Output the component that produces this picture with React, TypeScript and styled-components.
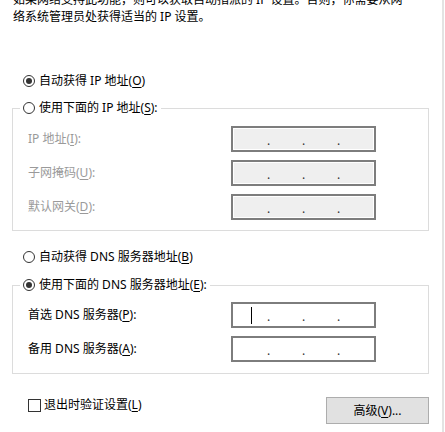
import React from "react";
import styled, { createGlobalStyle } from "styled-components";

const Global = createGlobalStyle`
  html, body { margin: 0; padding: 0; background: #fff; overflow: hidden; }
  body {
    font-family: "Noto Sans", "Noto Sans CJK SC", "Microsoft YaHei UI", sans-serif;
    font-size: 12px;
    color: #000;
  }
  * { box-sizing: border-box; }
`;

const Page = styled.div`
  display: flex;
  width: 445px;
  height: 432px;
  overflow: hidden;
  background: #fff;
`;

const Main = styled.div`
  flex: 0 0 442px;
  display: flex;
  flex-direction: column;
  padding: 0 13px 0 12px;
`;

const EdgeStrip = styled.div`
  flex: 0 0 2px;
  background: #e3e3e3;
`;

const Intro = styled.p`
  margin: -9px 0 0 1px;
  line-height: 17px;
  white-space: nowrap;
`;

const OptionRow = styled.div<{ $top: number }>`
  display: flex;
  align-items: center;
  height: 16px;
  line-height: 16px;
  margin-top: ${(p) => p.$top}px;
  padding-left: 11px;
`;

const RadioLabel = styled.span`
  display: inline-flex;
  align-items: center;
  gap: 4px;
  height: 16px;
  line-height: 16px;
  white-space: nowrap;
`;

const RadioCircle = styled.span<{ $checked?: boolean }>`
  position: relative;
  display: inline-block;
  width: 12px;
  height: 12px;
  border: 1px solid #333;
  border-radius: 50%;
  background: #fff;
  &::after {
    content: "";
    display: ${(p) => (p.$checked ? "block" : "none")};
    position: absolute;
    left: 2px;
    top: 2px;
    width: 6px;
    height: 6px;
    border-radius: 50%;
    background: #333;
  }
`;

const Group = styled.fieldset<{ $top: number; $pt: number; $pb: number }>`
  margin: ${(p) => p.$top}px 0 0 0;
  min-width: 0;
  border: 1px solid #dcdcdc;
  padding: ${(p) => p.$pt}px 0 ${(p) => p.$pb}px 7px;
`;

const Legend = styled.legend`
  padding: 0 3px;
  height: 16px;
  line-height: 16px;
`;

const FieldGrid = styled.div`
  display: grid;
  grid-template-columns: 203px 145px;
  row-gap: 8px;
  padding-left: 8px;
  align-items: center;
`;

const FieldLabel = styled.span<{ $disabled?: boolean }>`
  line-height: 16px;
  color: ${(p) => (p.$disabled ? "#9a9a9a" : "#000")};
  white-space: nowrap;
`;

const IpBox = styled.div<{ $disabled?: boolean }>`
  display: flex;
  justify-content: center;
  align-items: center;
  height: 26px;
  border: 2px solid #7d7d7d;
  background: ${(p) => (p.$disabled ? "#efefef" : "#fff")};
  box-shadow: ${(p) => (p.$disabled ? "inset 0 0 0 1px #fff" : "none")};
`;

const Segment = styled.span`
  display: flex;
  justify-content: center;
  align-items: center;
  width: 30px;
  height: 17px;
`;

const Dot = styled.span`
  width: 5px;
  text-align: center;
  line-height: 16px;
  padding-top: 3px;
  color: #333;
`;

const Caret = styled.span`
  display: block;
  width: 1px;
  height: 17px;
  background: #000;
`;

const BottomRow = styled.div`
  display: flex;
  justify-content: space-between;
  align-items: flex-start;
  margin-top: 23px;
  padding-left: 16px;
`;

const CheckLabel = styled.span`
  display: inline-flex;
  align-items: center;
  gap: 3px;
  height: 16px;
  line-height: 16px;
`;

const CheckBox = styled.span`
  display: inline-block;
  width: 13px;
  height: 13px;
  border: 1px solid #333;
  background: #fff;
`;

const Button = styled.button`
  width: 103px;
  height: 27px;
  padding: 0;
  border: 1px solid #adadad;
  background: #e1e1e1;
  font: inherit;
  font-size: 12px;
  color: #000;
  line-height: 16px;
`;

const Key = styled.u`
  text-decoration: underline;
  text-underline-offset: 2px;
`;

function IpField({ disabled, caret }: { disabled?: boolean; caret?: boolean }) {
  return (
    <IpBox $disabled={disabled}>
      <Segment>{caret ? <Caret /> : null}</Segment>
      <Dot>.</Dot>
      <Segment />
      <Dot>.</Dot>
      <Segment />
      <Dot>.</Dot>
      <Segment />
    </IpBox>
  );
}

export default function App() {
  return (
    <>
      <Global />
      <Page>
        <Main>
          <Intro>
            如果网络支持此功能，则可以获取自动指派的 IP 设置。否则，你需要从网
            <br />
            络系统管理员处获得适当的 IP 设置。
          </Intro>

          <OptionRow $top={48}>
            <RadioLabel>
              <RadioCircle $checked />
              <span>
                自动获得 IP 地址(<Key>O</Key>)
              </span>
            </RadioLabel>
          </OptionRow>

          <Group $top={11} $pt={10} $pb={10}>
            <Legend>
              <RadioLabel>
                <RadioCircle />
                <span>
                  使用下面的 IP 地址(<Key>S</Key>):
                </span>
              </RadioLabel>
            </Legend>
            <FieldGrid>
              <FieldLabel $disabled>
                IP 地址(<Key>I</Key>):
              </FieldLabel>
              <IpField disabled />
              <FieldLabel $disabled>
                子网掩码(<Key>U</Key>):
              </FieldLabel>
              <IpField disabled />
              <FieldLabel $disabled>
                默认网关(<Key>D</Key>):
              </FieldLabel>
              <IpField disabled />
            </FieldGrid>
          </Group>

          <OptionRow $top={18}>
            <RadioLabel>
              <RadioCircle />
              <span>
                自动获得 DNS 服务器地址(<Key>B</Key>)
              </span>
            </RadioLabel>
          </OptionRow>

          <Group $top={12} $pt={9} $pb={11}>
            <Legend>
              <RadioLabel>
                <RadioCircle $checked />
                <span>
                  使用下面的 DNS 服务器地址(<Key>E</Key>):
                </span>
              </RadioLabel>
            </Legend>
            <FieldGrid>
              <FieldLabel>
                首选 DNS 服务器(<Key>P</Key>):
              </FieldLabel>
              <IpField caret />
              <FieldLabel>
                备用 DNS 服务器(<Key>A</Key>):
              </FieldLabel>
              <IpField />
            </FieldGrid>
          </Group>

          <BottomRow>
            <CheckLabel>
              <CheckBox />
              <span>
                退出时验证设置(<Key>L</Key>)
              </span>
            </CheckLabel>
            <Button type="button">
              高级(<Key>V</Key>)...
            </Button>
          </BottomRow>
        </Main>
        <EdgeStrip />
      </Page>
    </>
  );
}
